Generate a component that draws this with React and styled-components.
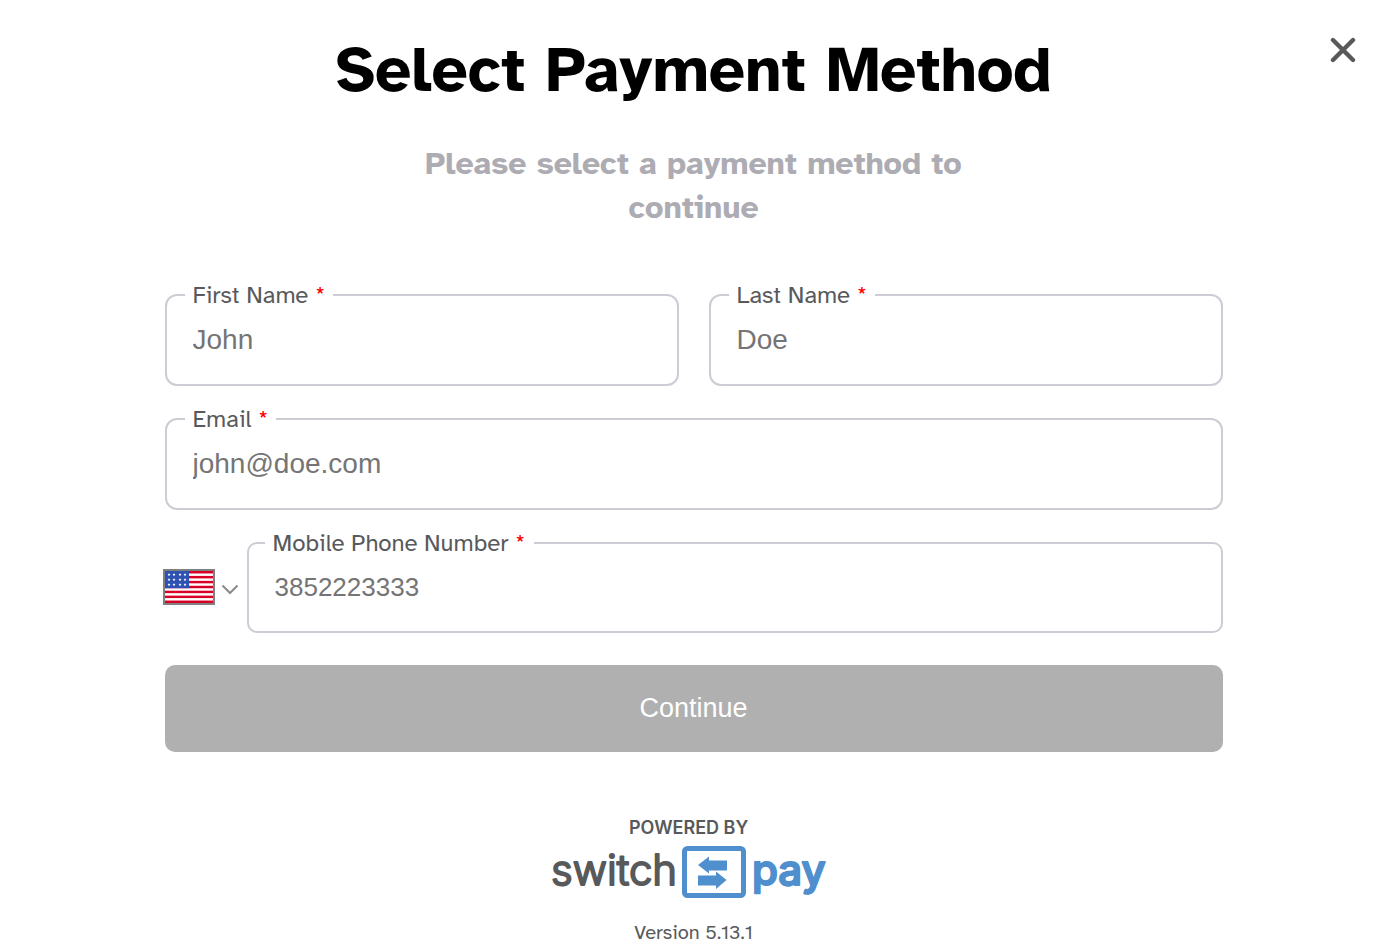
import React from 'react';
import styled, { createGlobalStyle } from 'styled-components';

const GlobalStyle = createGlobalStyle`
  * {
    box-sizing: border-box;
  }
  body {
    margin: 0;
    background: #fff;
    font-family: "Atkinson Hyperlegible", "Noto Sans", sans-serif;
    color: #58595b;
  }
`;

const Field = ({ id, label, phone, ...rest }) => {
    return (
        <FieldBox $phone={phone}>
            <legend>
                <label htmlFor={id}>{label} <Required>*</Required></label>
            </legend>
            <TextInput id={id} $phone={phone} {...rest} />
        </FieldBox>
    )
};

const stripes = [0, 2, 4, 6, 8, 10, 12];
const starColumns = [4, 9, 15, 20];
const starRows = [3, 8, 13];

const Flag = () => (
    <FlagSvg viewBox="0 0 48 32" aria-hidden="true">
        <rect width="48" height="32" fill="#fff" />
        {stripes.map((n) => (
            <rect key={n} y={(n * 32) / 13} width="48" height={32 / 13} fill="#d80027" />
        ))}
        <rect width="24" height="17.2" fill="#2e52b2" />
        {starRows.map((y) => starColumns.map((x) => (
            <path
                key={`${x}-${y}`}
                transform={`translate(${x} ${y + 0.5})`}
                d="M0-1.6.4-.5 1.5-.5.7.3 1 1.4 0 .8-1 1.4-.7.3-1.5-.5-.4-.5Z"
                fill="#fff"
            />
        )))}
    </FlagSvg>
);

const Logo = () => (
    <LogoSvg viewBox="0 0 280 84" role="img" aria-label="Powered by switchpay">
        <PoweredText x="78" y="18">POWERED BY</PoweredText>
        <BrandText x="0" y="69">switch</BrandText>
        <rect x="133.5" y="32.5" width="59" height="47" rx="3" fill="none" stroke="#4f8fcd" strokeWidth="5" />
        <path d="M147 49 158 40.5V44.5H176V54.5H158V57.5Z" fill="#4f8fcd" />
        <path d="M175.5 64 165 55.5V59.5H147V69.5H165V73Z" fill="#4f8fcd" />
        <BrandText x="201" y="69" $accent>pay</BrandText>
    </LogoSvg>
);

const App = () => {
    return (
        <Wrapper>
            <GlobalStyle />
            <CloseButton type="button" aria-label="Close">
                <svg viewBox="0 0 26 26" width="26" height="26">
                    <path d="M3 3 23 23M23 3 3 23" stroke="#58595b" strokeWidth="4.4" strokeLinecap="round" />
                </svg>
            </CloseButton>
            <Title>Select Payment Method</Title>
            <Subtitle>Please select a payment method to continue</Subtitle>
            <Form onSubmit={(e) => e.preventDefault()}>
                <NameRow>
                    <Field id="firstName" label="First Name" placeholder="John" />
                    <Field id="lastName" label="Last Name" placeholder="Doe" />
                </NameRow>
                <Field id="email" type="email" label="Email" placeholder="john@doe.com" />
                <PhoneRow>
                    <CountryButton type="button" aria-label="Country">
                        <Flag />
                        <svg viewBox="0 0 18 16" width="18" height="16">
                            <path d="M1.5 6.5 9 14 16.5 6.5" fill="none" stroke="#8a8a8a" strokeWidth="2" />
                        </svg>
                    </CountryButton>
                    <Field id="phone" type="tel" label="Mobile Phone Number" placeholder="3852223333" phone />
                </PhoneRow>
                <SubmitButton type="submit">Continue</SubmitButton>
            </Form>
            <Footer>
                <Logo />
                <Version>Version 5.13.1</Version>
            </Footer>
        </Wrapper>
    )
};

const Wrapper = styled.main`
  position: relative;
  padding: 26px 24px 0;
`;

const CloseButton = styled.button`
  position: absolute;
  top: 37px;
  right: 31px;
  padding: 0;
  border: 0;
  background: none;
  cursor: pointer;
  svg {
    display: block;
  }
`;

const Title = styled.h1`
  margin: 0;
  color: #000;
  font-size: 64px;
  font-weight: 700;
  line-height: 88px;
  text-align: center;
`;

const Subtitle = styled.h2`
  max-width: 600px;
  margin: 28px auto 0;
  color: #adacb3;
  font-size: 32px;
  font-weight: 700;
  line-height: 44px;
  text-align: center;
`;

const Form = styled.form`
  display: flex;
  flex-direction: column;
  gap: 19px;
  max-width: 1058px;
  margin: 51px auto 0;
`;

const NameRow = styled.div`
  display: grid;
  grid-template-columns: 1fr 1fr;
  gap: 30px;
`;

const PhoneRow = styled.div`
  display: grid;
  grid-template-columns: 74px 1fr;
  gap: 8px;
`;

const FieldBox = styled.fieldset`
  min-width: 0;
  margin: 0;
  padding: 0 ${({ $phone }) => ($phone ? '16px' : '18px')} 13px;
  border: 2px solid #cdccd4;
  border-radius: ${({ $phone }) => ($phone ? '10px' : '12px')};
  legend {
    padding: 0 8px;
    font-size: 24px;
    line-height: 28px;
  }
`;

const Required = styled.span`
  color: #f00;
`;

const TextInput = styled.input`
  display: block;
  width: 100%;
  height: ${({ $phone }) => ($phone ? '61px' : '62px')};
  padding: 0 ${({ $phone }) => ($phone ? '10px' : '8px')};
  border: 0;
  outline: 0;
  background: none;
  color: #333;
  font-family: "Liberation Sans", Arial, sans-serif;
  font-size: ${({ $phone }) => ($phone ? '26px' : '28px')};
  &::placeholder {
    color: #757575;
  }
`;

const CountryButton = styled.button`
  display: flex;
  align-items: center;
  gap: 8px;
  padding: 12px 0 0;
  border: 0;
  background: none;
  cursor: pointer;
`;

const FlagSvg = styled.svg`
  flex: none;
  width: 48px;
  height: 32px;
  outline: 2px solid #808080;
`;

const SubmitButton = styled.button`
  height: 87px;
  margin-top: 13px;
  border: 0;
  border-radius: 10px;
  background: #b0b0b0;
  color: #fff;
  font-family: "Liberation Sans", Arial, sans-serif;
  font-size: 27px;
  cursor: pointer;
`;

const Footer = styled.footer`
  display: flex;
  flex-direction: column;
  align-items: center;
  margin-top: 64px;
`;

const LogoSvg = styled.svg`
  width: 280px;
  height: 84px;
  margin-right: 6px;
`;

const PoweredText = styled.text`
  fill: #58595b;
  font-family: Inter, sans-serif;
  font-size: 18px;
  font-weight: 600;
`;

const BrandText = styled.text`
  fill: ${({ $accent }) => ($accent ? '#4f8fcd' : '#58595b')};
  stroke: ${({ $accent }) => ($accent ? '#4f8fcd' : '#58595b')};
  stroke-width: 2px;
  stroke-linejoin: round;
  font-family: Inter, sans-serif;
  font-size: 42px;
  font-weight: ${({ $accent }) => ($accent ? 500 : 300)};
`;

const Version = styled.p`
  margin: 19px 0 0;
  font-size: 20px;
  line-height: 28px;
`;

export default App;
